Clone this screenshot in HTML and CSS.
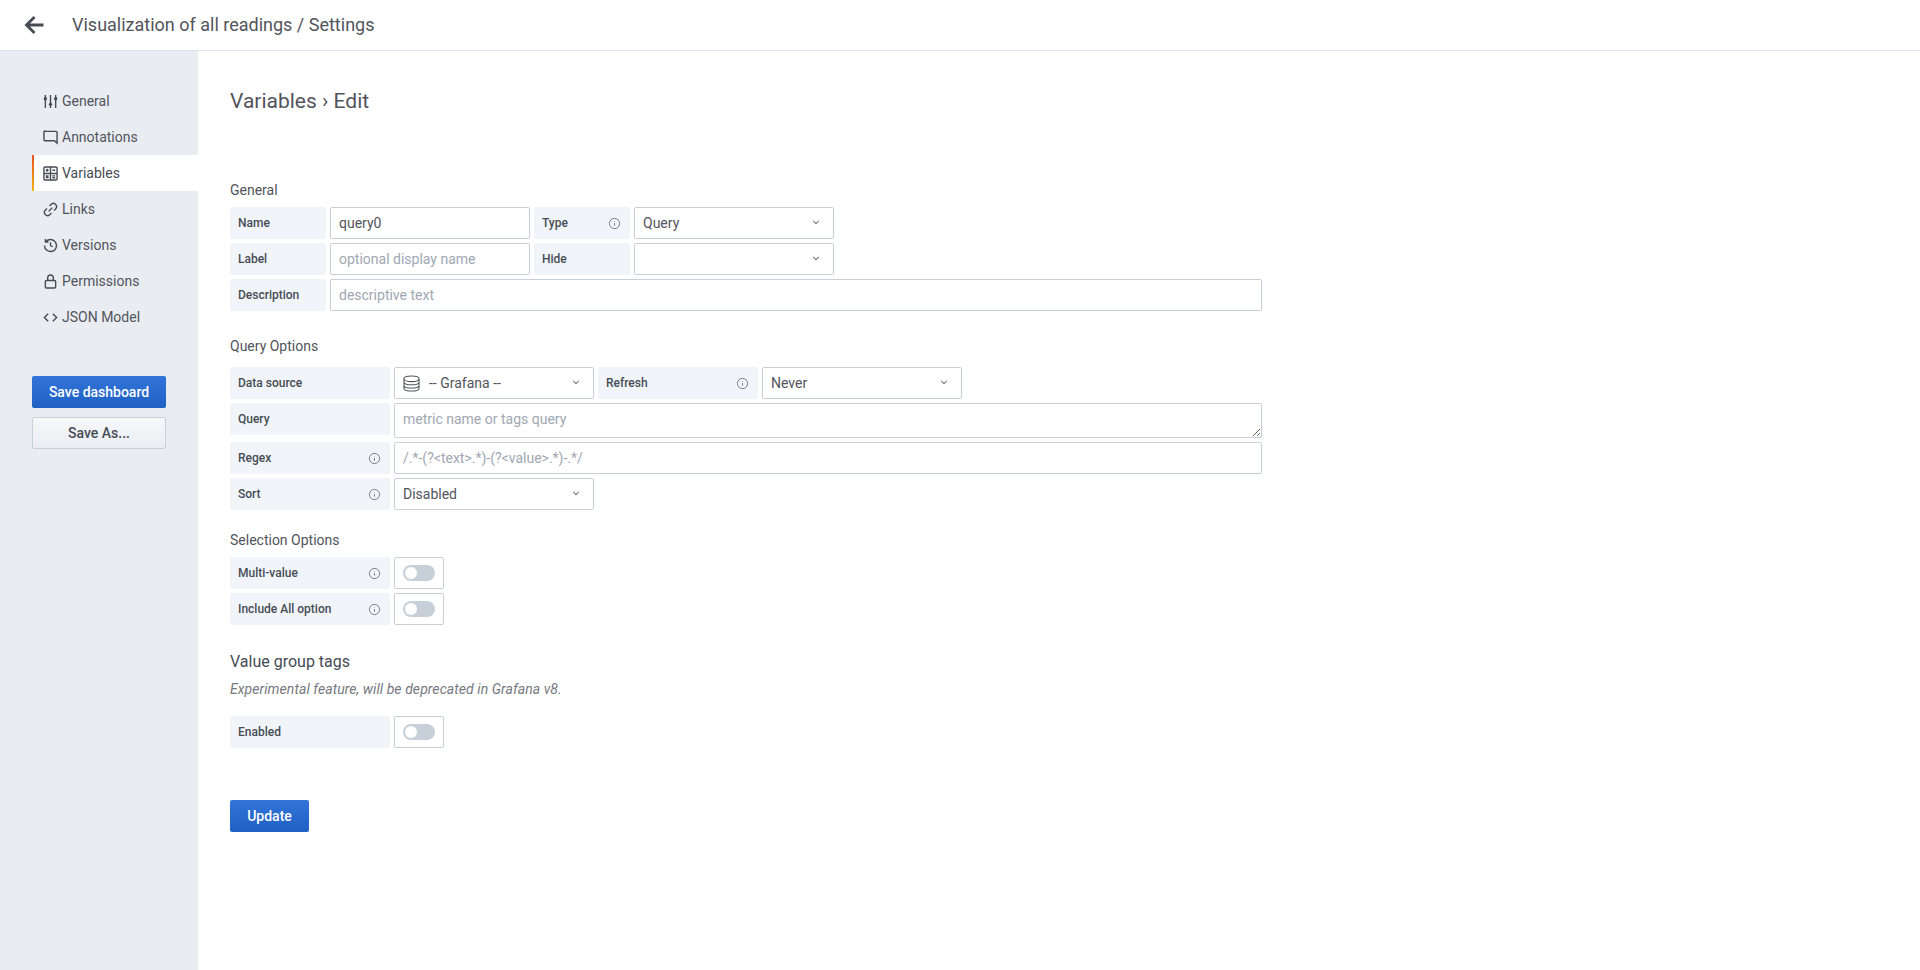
FILE: index.html
```html
<!DOCTYPE html>
<html lang="en">
  <head>
    <meta charset="UTF-8" />
    <title>Visualization of all readings / Settings</title>
    <link rel="stylesheet" href="styles.css">
  </head>
  <body>
    <header class="topbar">
      <svg class="back" viewBox="0 0 24 24"><path d="M21.500 12H5M12.500 4 4.500 12l8 8" /></svg>
      <h1 class="page_title">Visualization of all readings / Settings</h1>
    </header>
    <div class="main">
      <aside class="sidebar">
        <nav class="menu">
          <a class="menu_item">
            <svg class="menu_icon" viewBox="0 0 16 16"><path d="M2.500 1v14M8 1v14M13.500 1v14" /><circle class="knob" cx="2.500" cy="5" r="1.800" /><circle class="knob" cx="8" cy="11" r="1.800" /><circle class="knob" cx="13.500" cy="5" r="1.800" /></svg>General
          </a>
          <a class="menu_item">
            <svg class="menu_icon" viewBox="0 0 16 16"><path d="M2 1.500h12a1 1 0 0 1 1 1v11.500l-2.800-2.500H2a1 1 0 0 1-1-1v-8.500a1 1 0 0 1 1-1z" /></svg>Annotations
          </a>
          <a class="menu_item active">
            <svg class="menu_icon" viewBox="0 0 16 16"><rect x="1" y="1" width="14" height="14" rx="1.200" /><path d="M8 1v14M1 8h14M3 4.500h3M4.500 3v3M10 4.500h3M3.200 10.200l2.600 2.600M5.800 10.200l-2.600 2.600M10 10.500h3M10 12.500h3" /></svg>Variables
          </a>
          <a class="menu_item">
            <svg class="menu_icon" viewBox="0 0 16 16"><path d="M6 10l4-4M7 4.200l1.800-1.800a3.400 3.400 0 0 1 4.800 4.800L11.800 9M9 11.800l-1.800 1.800a3.400 3.400 0 0 1-4.800-4.800L4.200 7" /></svg>Links
          </a>
          <a class="menu_item">
            <svg class="menu_icon" viewBox="0 0 16 16"><path d="M3.200 3.800A6.400 6.400 0 1 1 1.600 8M2.600 1v3.200h3.200M8 4.500V8l2.200 1.600" /></svg>Versions
          </a>
          <a class="menu_item">
            <svg class="menu_icon" viewBox="0 0 16 16"><rect x="2.500" y="7" width="11" height="8" rx="1.200" /><path d="M5 7V4a3 3 0 0 1 6 0v3" /></svg>Permissions
          </a>
          <a class="menu_item">
            <svg class="menu_icon" viewBox="0 0 16 16"><path d="M5.500 4 1.500 8l4 4M10.500 4l4 4-4 4" /></svg>JSON Model
          </a>
        </nav>
        <button class="btn btn_primary btn_side">Save dashboard</button>
        <button class="btn btn_secondary btn_side">Save As...</button>
      </aside>

      <section class="content">
        <h2 class="crumb">Variables › Edit</h2>

        <h5 class="section_title title_general">General</h5>
        <div class="form_row">
          <label class="form_label w96">Name</label>
          <div class="field w200">query0</div>
          <label class="form_label w96">Type<svg class="info" viewBox="0 0 16 16"><circle cx="8" cy="8" r="6.300" /><path d="M8 7.500v3.200M8 5v.6" /></svg></label>
          <div class="field w200 select">Query<svg class="caret" viewBox="0 0 10 6"><path d="M1.500 1 5 4.500 8.500 1" /></svg></div>
        </div>
        <div class="form_row">
          <label class="form_label w96">Label</label>
          <div class="field w200 placeholder">optional display name</div>
          <label class="form_label w96">Hide</label>
          <div class="field w200 select"><svg class="caret" viewBox="0 0 10 6"><path d="M1.500 1 5 4.500 8.500 1" /></svg></div>
        </div>
        <div class="form_row">
          <label class="form_label w96">Description</label>
          <div class="field grow placeholder">descriptive text</div>
        </div>

        <h5 class="section_title title_query">Query Options</h5>
        <div class="form_row">
          <label class="form_label w160">Data source</label>
          <div class="field w200 select">
            <svg class="db" viewBox="0 0 18 18"><ellipse cx="9" cy="4" rx="8" ry="3" /><path d="M1 4v10c0 1.700 3.500 3 8 3s8-1.300 8-3V4M1 7.400c0 1.700 3.500 3 8 3s8-1.300 8-3M1 10.800c0 1.700 3.500 3 8 3s8-1.300 8-3" /></svg>
            -- Grafana --<svg class="caret" viewBox="0 0 10 6"><path d="M1.500 1 5 4.500 8.500 1" /></svg>
          </div>
          <label class="form_label w160">Refresh<svg class="info" viewBox="0 0 16 16"><circle cx="8" cy="8" r="6.300" /><path d="M8 7.500v3.200M8 5v.6" /></svg></label>
          <div class="field w200 select">Never<svg class="caret" viewBox="0 0 10 6"><path d="M1.500 1 5 4.500 8.500 1" /></svg></div>
        </div>
        <div class="form_row query_row">
          <label class="form_label w160">Query</label>
          <textarea class="field grow area" placeholder="metric name or tags query"></textarea>
        </div>
        <div class="form_row">
          <label class="form_label w160">Regex<svg class="info" viewBox="0 0 16 16"><circle cx="8" cy="8" r="6.300" /><path d="M8 7.500v3.200M8 5v.6" /></svg></label>
          <div class="field grow placeholder">/.*-(?&lt;text&gt;.*)-(?&lt;value&gt;.*)-.*/</div>
        </div>
        <div class="form_row">
          <label class="form_label w160">Sort<svg class="info" viewBox="0 0 16 16"><circle cx="8" cy="8" r="6.300" /><path d="M8 7.500v3.200M8 5v.6" /></svg></label>
          <div class="field w200 select">Disabled<svg class="caret" viewBox="0 0 10 6"><path d="M1.500 1 5 4.500 8.500 1" /></svg></div>
        </div>

        <h5 class="section_title title_selection">Selection Options</h5>
        <div class="form_row">
          <label class="form_label w160">Multi-value<svg class="info" viewBox="0 0 16 16"><circle cx="8" cy="8" r="6.300" /><path d="M8 7.500v3.200M8 5v.6" /></svg></label>
          <div class="switch"><span class="slider"></span></div>
        </div>
        <div class="form_row">
          <label class="form_label w160">Include All option<svg class="info" viewBox="0 0 16 16"><circle cx="8" cy="8" r="6.300" /><path d="M8 7.500v3.200M8 5v.6" /></svg></label>
          <div class="switch"><span class="slider"></span></div>
        </div>

        <h4 class="group_title">Value group tags</h4>
        <p class="group_note">Experimental feature, will be deprecated in Grafana v8.</p>
        <div class="form_row">
          <label class="form_label w160">Enabled</label>
          <div class="switch"><span class="slider"></span></div>
        </div>

        <button class="btn btn_primary btn_update">Update</button>
      </section>
    </div>
  </body>
</html>
```

FILE: styles.css
```css
* {
  box-sizing: border-box;
}
html,
body {
  height: 100%;
}
body {
  margin: 0;
  display: flex;
  flex-direction: column;
  overflow: hidden;
  font-family: Roboto, "Liberation Sans", sans-serif;
  font-size: 14px;
  color: #464c54;
  background-color: #fff;
}
.topbar {
  display: flex;
  align-items: center;
  height: 51px;
  flex-shrink: 0;
  padding-left: 22px;
  border-bottom: 1px solid #dde4ed;
}
.back {
  width: 24px;
  height: 24px;
  fill: none;
  stroke: #464c54;
  stroke-width: 2.800;
}
.page_title {
  margin: 0 0 1px 26px;
  font-size: 18px;
  font-weight: 400;
  color: #52545c;
}
.main {
  display: flex;
  flex: 1;
}
.sidebar {
  width: 198px;
  flex-shrink: 0;
  padding: 32px 0 0 32px;
  background-color: #e9edf2;
}
.menu {
  margin-bottom: 41px;
}
.menu_item {
  display: flex;
  align-items: center;
  height: 36px;
  padding-left: 11px;
  color: #52545c;
}
.menu_item.active {
  background-color: #fff;
  color: #464c54;
  border-left: 2px solid;
  padding-left: 9px;
  border-image: linear-gradient(#eb4f24, #f5b60f) 1;
}
.menu_icon {
  width: 15px;
  height: 15px;
  margin-right: 4px;
  fill: none;
  stroke: #464c54;
  stroke-width: 1.500;
}
.knob {
  fill: #464c54;
  stroke: none;
}
.btn {
  display: block;
  font-family: inherit;
  font-weight: 500;
  font-size: 14px;
  border-radius: 2px;
}
.btn_primary {
  color: #fff;
  border: none;
  background: linear-gradient(#3274d9, #1f60c4);
}
.btn_secondary {
  color: #464c54;
  border: 1px solid #c7d0d9;
  background: linear-gradient(#f7f8fa, #e9edf2);
}
.btn_side {
  width: 134px;
  height: 32px;
  margin-bottom: 9px;
}
.content {
  flex: 1;
  padding: 0 0 0 32px;
}
.crumb {
  margin: 37px 0 0;
  font-size: 21px;
  line-height: 26px;
  font-weight: 400;
  color: #52545c;
}
.section_title {
  font-size: 14px;
  line-height: 17px;
  font-weight: 400;
  color: #52545c;
}
.title_general {
  margin: 68px 0 8px;
}
.title_query {
  margin: 27px 0 12px;
}
.title_selection {
  margin: 22px 0 8px;
}
.form_row {
  display: flex;
  width: 1032px;
  height: 32px;
  margin-bottom: 4px;
}
.query_row {
  height: 35px;
}
.form_label {
  display: flex;
  align-items: center;
  justify-content: space-between;
  flex-shrink: 0;
  height: 32px;
  margin-right: 4px;
  padding: 0 8px;
  font-size: 12px;
  font-weight: 500;
  color: #464c54;
  background-color: #f1f5f9;
  border-radius: 2px;
}
.w96 {
  width: 96px;
}
.w160 {
  width: 160px;
}
.w200 {
  width: 200px;
}
.info {
  width: 13px;
  height: 13px;
  margin-right: 1px;
  fill: none;
  stroke: #767980;
  stroke-width: 1.200;
}
.field {
  display: flex;
  align-items: center;
  flex-shrink: 0;
  height: 32px;
  margin-right: 4px;
  padding: 0 8px;
  font-family: inherit;
  font-size: 14px;
  color: #52545c;
  background-color: #fff;
  border: 1px solid #c7d0d9;
  border-radius: 2px;
}
.grow {
  flex: 1;
  margin-right: 0;
}
.placeholder,
.area::placeholder {
  color: #9fa7b3;
}
.area {
  height: 35px;
  padding-top: 7px;
  outline: none;
  display: block;
}
.select {
  position: relative;
}
.caret {
  position: absolute;
  right: 13px;
  top: 12px;
  width: 8px;
  height: 5px;
  fill: none;
  stroke: #767980;
  stroke-width: 1.300;
}
.db {
  width: 17px;
  height: 17px;
  margin-right: 9px;
  fill: none;
  stroke: #52545c;
  stroke-width: 1.100;
}
.switch {
  display: flex;
  align-items: center;
  justify-content: center;
  width: 50px;
  height: 32px;
  background-color: #fff;
  border: 1px solid #c7d0d9;
  border-radius: 2px;
}
.slider {
  position: relative;
  width: 32px;
  height: 16px;
  background-color: #c7d0d9;
  border-radius: 8px;
}
.slider::after {
  content: "";
  position: absolute;
  left: 2px;
  top: 2px;
  width: 12px;
  height: 12px;
  background-color: #fff;
  border-radius: 50%;
}
.group_title {
  margin: 25px 0 0;
  font-size: 16px;
  line-height: 24px;
  font-weight: 400;
  color: #464c54;
}
.group_note {
  margin: 6px 0 18px;
  line-height: 18px;
  font-style: italic;
  letter-spacing: 0.07px;
  color: #767980;
}
.btn_update {
  width: 79px;
  height: 32px;
  margin-top: 52px;
}
```
